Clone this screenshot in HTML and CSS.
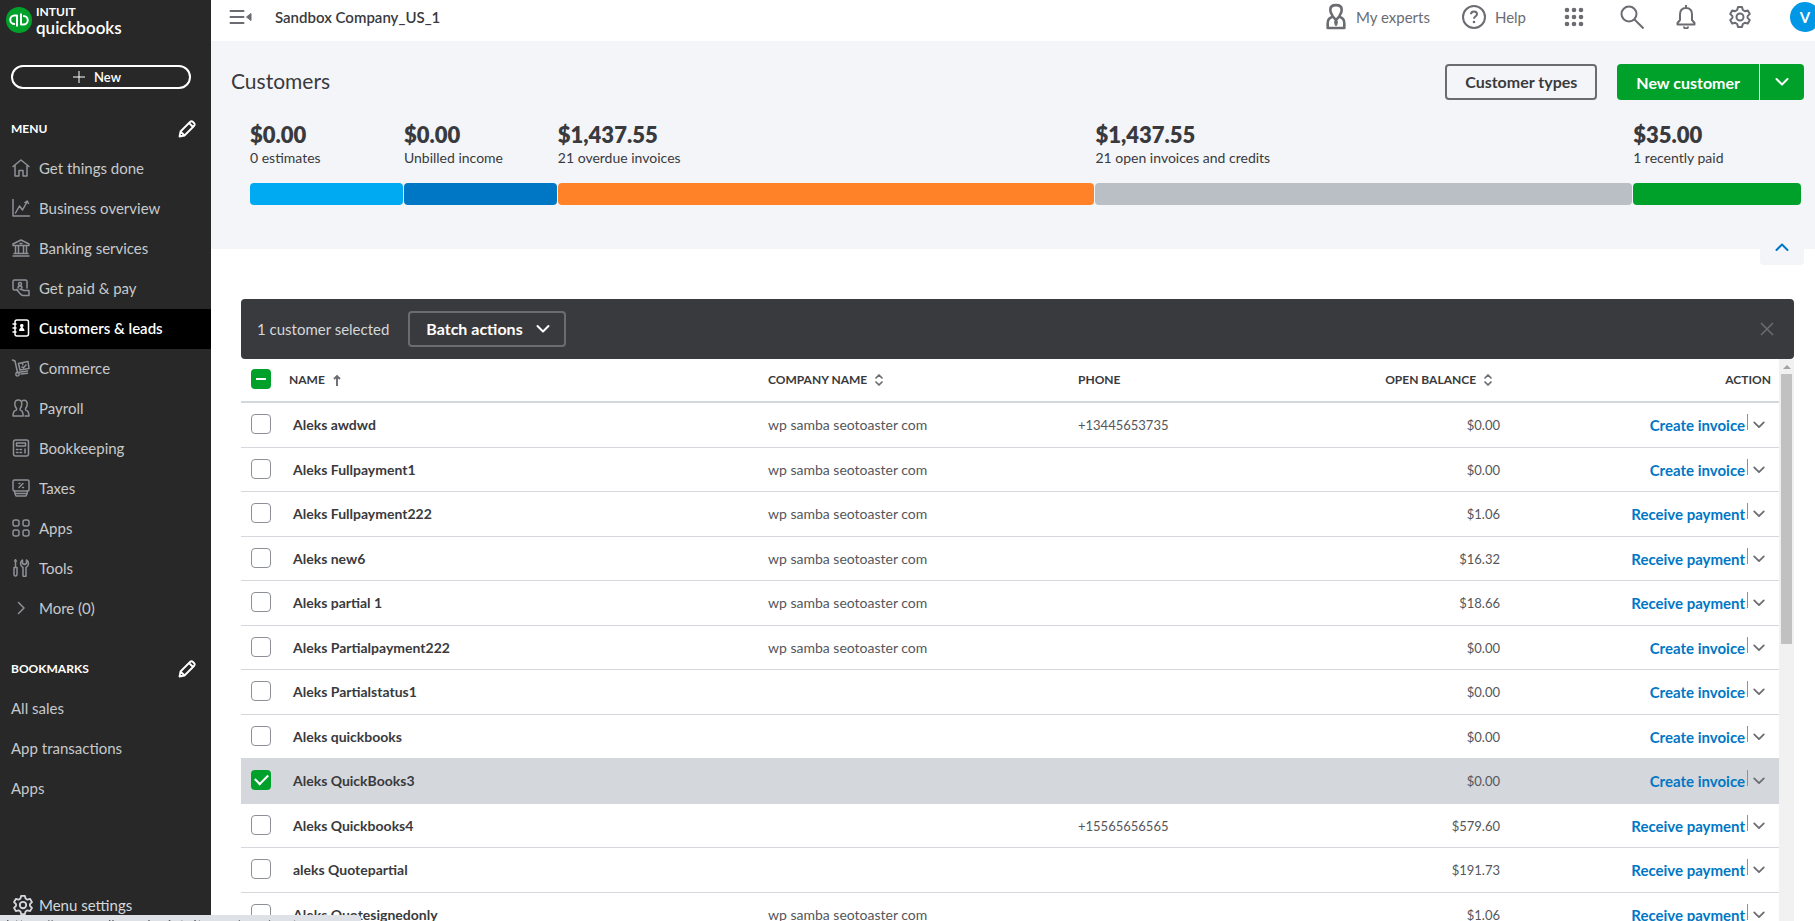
FILE: index.html
```
<!DOCTYPE html>
<html lang="en">
<head>
<meta charset="utf-8">
<title>Customers</title>
<link rel="stylesheet" href="styles.css">
</head>
<body>
<svg class="defs" aria-hidden="true">
  <symbol id="chev" viewBox="0 0 16 16"><path d="M2.5 5 8 10.5 13.5 5" fill="none" stroke="currentColor" stroke-width="2" stroke-linecap="round" stroke-linejoin="round"/></symbol>
  <symbol id="pencil" viewBox="0 0 20 20"><path d="M2.500 17.500l1-5L13 3q1.500-1.500 3 0l1 1q1.500 1.500 0 3l-9.500 9.500zM12 4l4 4M3.500 12.500l4 4" fill="none" stroke="currentColor" stroke-width="1.800" stroke-linejoin="round"/></symbol>
  <symbol id="gear" viewBox="0 0 24 24"><path d="M10 2h4l.8 3 2 1.200 3-.8 2 3.500-2.200 2.200v1.800l2.200 2.200-2 3.500-3-.8-2 1.200-.8 3h-4l-.8-3-2-1.200-3 .8-2-3.500 2.200-2.200v-1.800L2.200 8.900l2-3.500 3 .8 2-1.200z" fill="none" stroke="currentColor" stroke-width="2" stroke-linejoin="round"/><circle cx="12" cy="12" r="3.500" fill="none" stroke="currentColor" stroke-width="2"/></symbol>
  <symbol id="sort" viewBox="0 0 10 14"><path d="M2 5 5 2 8 5M2 9 5 12 8 9" fill="none" stroke="currentColor" stroke-width="1.700" stroke-linecap="round" stroke-linejoin="round"/></symbol>
</svg>

<div class="app">
  <aside class="sidebar">
    <a class="logo" href="#" aria-label="Intuit QuickBooks">
      <svg class="logo-mark" viewBox="0 0 26 26"><circle cx="13" cy="13" r="13" fill="#00a12b"/><path d="M11 8.500H8.500a4 4 0 0 0 0 8.500H9M11 7.700v11.800M15 17.500h2.500a4 4 0 0 0 0-8.500H17M15 6.500v11.800" fill="none" stroke="#fff" stroke-width="2"/></svg>
      <span class="logo-text"><span class="logo-top">INTUIT</span><span class="logo-name">quickbooks</span></span>
    </a>
    <button class="new-btn" type="button"><svg viewBox="0 0 12 12"><path d="M6 0v12M0 6h12" stroke="currentColor" stroke-width="1"/></svg>New</button>

    <div class="side-head"><h2>MENU</h2><button type="button" aria-label="Edit menu"><svg><use href="#pencil"/></svg></button></div>
    <nav class="menu">
      <a href="#"><svg viewBox="0 0 18 18"><path d="M1 7.500 9 1l8 6.500M3 6v11h4v-5.500h4V17h4V6"/></svg>Get things done</a>
      <a href="#"><svg viewBox="0 0 18 18"><path d="M1 .5V17h16.500M3.500 14l4-7 3 4L15 3M13 3.500l2.200-1.500L16.500 4.500"/></svg>Business overview</a>
      <a href="#"><svg viewBox="0 0 18 18"><path d="M1 5 9 1l8 4v1.500H1zM3.500 7v7M6.500 7v7M11.500 7v7M14.500 7v7M2 14.500h14M1 17h16M8 4.500h2"/></svg>Banking services</a>
      <a href="#"><svg viewBox="0 0 18 18"><path d="M6 11H2.500Q1 11 1 9.500v-7Q1 1 2.500 1h11Q15 1 15 2.500V9M6 9q0-2 2-2t2 2M4.500 10.500l3.500 4q1.500 2 3 2h6v-5h-5L8 10"/><circle cx="8" cy="5" r="1.500"/></svg>Get paid &amp; pay</a>
      <a href="#" class="active" aria-current="page"><svg viewBox="0 0 18 18"><rect x="3" y="1" width="13.500" height="16" rx="2"/><path d="M1 5h3M1 9h3M1 13h3"/><path class="solid" d="M9.700 5a1.600 1.600 0 0 1 1 3l.3 1q1.500.5 1.500 3H7q0-2.500 1.500-3l.3-1a1.600 1.600 0 0 1 .9-3z"/></svg>Customers &amp; leads</a>
      <a href="#"><svg viewBox="0 0 18 18"><path d="M.5 1 3 2l2.500 11.500L15.500 12M6.500 4.500l9.500-2 1 7-9 1.500zM10 8l1.500.7L14 6M10.500 3.700l.3 2"/><circle cx="5.500" cy="15.200" r="1.700"/><path d="M9 15l6.500-.7"/></svg>Commerce</a>
      <a href="#"><svg viewBox="0 0 18 18"><path d="M4.500 11V9.500Q2.800 7.500 2.800 5q0-4 3.500-4T9.800 5q0 2.500-1.600 4.500V11q3 .8 3 6H1q0-5.500 3.500-6zM10 2q1-.8 2-.8 3.200 0 3.200 3.800 0 2.500-1.600 4.500v1.500q3.400.8 3.400 6h-4"/></svg>Payroll</a>
      <a href="#"><svg viewBox="0 0 18 18"><rect x="1.500" y="1" width="15" height="16" rx="2"/><rect x="4.500" y="4" width="9" height="3"/><path d="M4.500 10.500h1.500M8 10.500h1.500M4.500 13.500h1.500M8 13.500h1.500M13 10v4"/></svg>Bookkeeping</a>
      <a href="#"><svg viewBox="0 0 18 18"><rect x="1" y="1" width="16" height="11" rx="1.500"/><path d="M7 8.500 11 4.500M7 4.500h1M10.500 8.500h1M2.500 12l.5 2.500h12l.5-2.500M3 15l1 2h10l1-2"/></svg>Taxes</a>
      <a href="#"><svg viewBox="0 0 18 18"><rect x="1" y="1" width="6" height="6" rx="2"/><rect x="11" y="1" width="6" height="6" rx="2"/><rect x="1" y="11" width="6" height="6" rx="2"/><rect x="11" y="11" width="6" height="6" rx="2"/></svg>Apps</a>
      <a href="#"><svg viewBox="0 0 18 18"><path d="M3.500 0v8M2.500 2h2M2 8.500h3V15q0 2-1.500 2T2 15zM11 17V8.500Q8.500 7 8.500 4.500T10.500 1v3.500l2 1 2-1V1q2 1 2 3.500T14 8.500V17q-1.500.8-3 0"/></svg>Tools</a>
      <a href="#"><svg viewBox="0 0 18 18"><path d="m6.500 3.500 5.500 5.500-5.500 5.500"/></svg>More (0)</a>
    </nav>

    <div class="side-head"><h2>BOOKMARKS</h2><button type="button" aria-label="Edit bookmarks"><svg><use href="#pencil"/></svg></button></div>
    <nav class="menu"><a href="#">All sales</a><a href="#">App transactions</a><a href="#">Apps</a></nav>
    <a class="settings" href="#"><svg><use href="#gear"/></svg>Menu settings</a>
  </aside>

  <div class="main">
    <header class="topbar">
      <button class="icon-btn" type="button" aria-label="Collapse menu"><svg class="burger" viewBox="0 0 23 16"><path d="M1 2h13M1 8h13M1 14h13" stroke="currentColor" stroke-width="2" stroke-linecap="round"/><path d="m21.500 4.500v7L17 8z" fill="currentColor" stroke="currentColor" stroke-linejoin="round"/></svg></button>
      <span class="company">Sandbox Company_US_1</span>
      <div class="tools">
        <a href="#"><svg class="expert" viewBox="0 0 20 26"><path d="M6.500 13.500V12Q4.500 9.500 4.500 6.500 4.500 2 10 2t5.500 4.500q0 3-2 5.500v1.500q4.500 1 4.500 6V24H2v-4.500q0-5 4.500-6zM7 13l3 3.500 3-3.500" fill="none" stroke="currentColor" stroke-width="2.500" stroke-linejoin="round"/><path d="M10 15.500l2 2.500-1 4H9l-1-4z" fill="currentColor"/></svg>My experts</a>
        <a href="#"><svg class="help" viewBox="0 0 24 24"><circle cx="12" cy="12" r="11" fill="none" stroke="currentColor" stroke-width="2"/><path d="M9 9.200q0-2.800 3-2.800t3 2.600q0 1.500-1.500 2.300T12 13.800" fill="none" stroke="currentColor" stroke-width="2"/><circle cx="12" cy="17" r="1.300" fill="currentColor"/></svg>Help</a>
        <button class="icon-btn" type="button" aria-label="Apps"><svg class="grid" viewBox="0 0 20 20" fill="currentColor"><circle cx="3" cy="3" r="2.300"/><circle cx="10" cy="3" r="2.300"/><circle cx="17" cy="3" r="2.300"/><circle cx="3" cy="10" r="2.300"/><circle cx="10" cy="10" r="2.300"/><circle cx="17" cy="10" r="2.300"/><circle cx="3" cy="17" r="2.300"/><circle cx="10" cy="17" r="2.300"/><circle cx="17" cy="17" r="2.300"/></svg></button>
        <button class="icon-btn" type="button" aria-label="Search"><svg viewBox="0 0 24 24" fill="none" stroke="currentColor" stroke-width="2"><circle cx="9" cy="9" r="7.500"/><path d="m14.500 14.500 9 9"/></svg></button>
        <button class="icon-btn" type="button" aria-label="Notifications"><svg viewBox="0 0 24 24" fill="none" stroke="currentColor" stroke-width="2" stroke-linejoin="round"><path d="M12 0v2.500M6 15V9.500q0-6.500 6-6.500t6 6.500V15l2.500 3v1.500h-17V18zM10 21.500q0 2 2 2t2-2"/></svg></button>
        <button class="icon-btn" type="button" aria-label="Settings"><svg><use href="#gear"/></svg></button>
        <button class="avatar" type="button" aria-label="Account">V</button>
      </div>
    </header>

    <section class="hero">
      <div class="hero-head">
        <h1>Customers</h1>
        <button class="btn outline" type="button">Customer types</button>
        <div class="split">
          <button class="btn green" type="button">New customer</button>
          <button class="btn green caret" type="button" aria-label="More new customer options"><svg><use href="#chev"/></svg></button>
        </div>
      </div>
      <div class="moneybar">
        <div class="seg sky"><strong>$0.00</strong><span>0 estimates</span><i></i></div>
        <div class="seg blue"><strong>$0.00</strong><span>Unbilled income</span><i></i></div>
        <div class="seg orange wide"><strong>$1,437.55</strong><span>21 overdue invoices</span><i></i></div>
        <div class="seg gray wide"><strong>$1,437.55</strong><span>21 open invoices and credits</span><i></i></div>
        <div class="seg paid"><strong>$35.00</strong><span>1 recently paid</span><i></i></div>
      </div>
      <button class="fold" type="button" aria-label="Collapse summary"><svg><use href="#chev"/></svg></button>
    </section>

    <section class="list">
      <div class="batch">
        <span>1 customer selected</span>
        <button class="batch-btn" type="button">Batch actions<svg><use href="#chev"/></svg></button>
        <button class="close" type="button" aria-label="Clear selection"><svg viewBox="0 0 14 14"><path d="m1 1 12 12M13 1 1 13" stroke="currentColor" stroke-width="1.500"/></svg></button>
      </div>
      <div class="table-area">
        <table>
          <colgroup><col class="c-check"><col class="c-name"><col class="c-company"><col class="c-phone"><col class="c-balance"><col class="c-action"></colgroup>
          <thead><tr>
            <th><input class="partial" type="checkbox" aria-label="Select all customers" checked></th>
            <th>NAME <svg class="up" viewBox="0 0 10 14"><path d="M5 13V3M2 6 5 3l3 3" fill="none" stroke="currentColor" stroke-width="1.900"/></svg></th>
            <th>COMPANY NAME <svg><use href="#sort"/></svg></th>
            <th>PHONE</th>
            <th class="num">OPEN BALANCE <svg><use href="#sort"/></svg></th>
            <th class="act">ACTION</th>
          </tr></thead>
          <tbody id="rows"></tbody>
        </table>
        <div class="scrollbar" aria-hidden="true"><div class="arrow"></div><div class="thumb"></div></div>
      </div>
    </section>
  </div>
</div>
<div class="status">https://app.sandbox.qbo.intuit.com/app/customers</div>
<script src="app.js"></script>
</body>
</html>
```
FILE: styles.css
```
* { box-sizing: border-box; }
body { margin: 0; font: 15px/20px Lato, "Open Sans", sans-serif; color: #393a3d; background: #fff; }
h1, h2 { margin: 0; }
button { font: inherit; color: inherit; background: none; border: 0; padding: 0; cursor: pointer; }
a { color: inherit; text-decoration: none; }
svg { flex: none; display: block; }
.defs { position: absolute; width: 0; height: 0; }
.app { display: flex; height: 100vh; overflow: hidden; }

.sidebar { width: 211px; flex: none; display: flex; flex-direction: column; background: #282828; color: #c7c9cc; }
.logo { display: flex; gap: 4px; padding: 5px 6px 0; height: 65px; color: #fff; }
.logo-mark { width: 26px; height: 26px; margin-top: 2px; }
.logo-text { display: flex; flex-direction: column; }
.logo-top { font-size: 12px; line-height: 14px; font-weight: 700; }
.logo-name { font-size: 17px; line-height: 18px; font-weight: 600; }
.new-btn { flex: none; display: flex; align-items: center; justify-content: center; gap: 9px; height: 24px; margin: 0 20px 20px 11px; padding: 0 8px 1px 0; border: 2px solid #fff; border-radius: 12px; color: #fff; font-size: 13px; font-weight: 600; }
.new-btn svg { width: 12px; height: 12px; }
.side-head { flex: none; display: flex; align-items: center; justify-content: space-between; height: 40px; padding: 0 14px 0 11px; color: #fff; }
.side-head h2 { font-size: 12px; font-weight: 700; }
.side-head svg { width: 20px; height: 20px; }
.menu a { display: flex; align-items: center; gap: 8px; height: 40px; padding: 0 12px 2px 11px; }
.menu svg { width: 20px; height: 18px; fill: none; stroke: #8d9096; stroke-width: 1.5; stroke-linejoin: round; stroke-linecap: round; }
.menu .active { background: #000; color: #fff; font-weight: 600; }
.menu .active svg { stroke: #fff; }
.menu .solid { fill: currentColor; stroke: none; }
.menu + .side-head { margin-top: 20px; }
.settings { display: flex; align-items: center; gap: 5px; margin-top: auto; padding: 0 12px 5px; color: #d4d7dc; }
.settings svg { width: 22px; height: 22px; }

.main { flex: 1; min-width: 0; display: flex; flex-direction: column; }
.topbar { flex: none; display: flex; align-items: center; height: 41px; padding: 0 0 8px 18px; color: #6b6c72; }
.burger { width: 24px; height: 16px; }
.company { margin-left: 22px; color: #393a3d; font-weight: 600; }
.tools { display: flex; align-items: center; margin-left: auto; gap: 30px; margin-right: -5px; }
.tools a { display: flex; align-items: center; gap: 9px; margin-right: 2px; }
.tools .expert { width: 22px; height: 27px; }
.tools svg { width: 24px; height: 24px; }
.tools .grid { width: 20px; height: 20px; margin: 0 6px; }
.avatar { width: 30px; height: 30px; margin-left: 8px; border-radius: 50%; background: #0097e6; color: #fff; font-weight: 700; }

.hero { position: relative; flex: none; height: 208px; padding: 23px 11px 0 20px; background: #f4f5f8; }
.hero-head { display: flex; align-items: center; gap: 20px; height: 36px; }
h1 { flex: 1; padding-bottom: 2px; font-size: 21px; line-height: 28px; font-weight: 400; }
.btn { height: 36px; padding: 2px 19px 0; font-size: 16px; font-weight: 700; border-radius: 4px; }
.outline { border: 2px solid #6b6c72; padding: 0 18px; }
.split { display: flex; gap: 1px; }
.green { background: #00a12b; color: #fff; border-radius: 4px 0 0 4px; }
.caret { width: 44px; padding: 0 14px; border-radius: 0 4px 4px 0; }
.caret svg, .fold svg { width: 16px; height: 16px; }
.moneybar { display: flex; gap: 1px; margin: 22px 3px 0 19px; }
.seg { flex: 153 1 0; min-width: 0; display: flex; flex-direction: column; white-space: nowrap; }
.seg.wide { flex-grow: 537; }
.seg.paid { flex-grow: 168; }
.seg strong { font-size: 22px; line-height: 26px; font-weight: 800; }
.seg span { font-size: 14px; line-height: 20px; }
.seg i { height: 22px; margin-top: 15px; border-radius: 4px; background: #00a12b; }
.sky i { background: #00aaf3; }
.blue i { background: #0077c5; }
.orange i { background: #ff8228; }
.gray i { background: #babec5; }
.fold { position: absolute; right: 11px; bottom: -16px; width: 44px; height: 28px; padding: 0 14px 8px; background: #f4f5f8; border-radius: 0 0 4px 4px; color: #0077c5; }
.fold svg { transform: rotate(180deg); }

.list { flex: 1; min-height: 0; display: flex; flex-direction: column; padding: 50px 21px 0 30px; }
.batch { flex: none; display: flex; align-items: center; height: 60px; padding: 0 20px 0 16px; background: #393a3d; color: #d4d7dc; border-radius: 4px; }
.batch-btn { display: flex; align-items: center; gap: 12px; height: 36px; margin-left: 19px; padding: 0 13px 0 16px; border: 2px solid #6b6c72; border-radius: 4px; color: #fff; font-size: 16px; font-weight: 700; }
.batch-btn svg { width: 16px; height: 16px; }
.close { margin-left: auto; color: #6b6c72; }
.close svg { width: 14px; height: 14px; }
.table-area { flex: 1; min-height: 0; display: flex; overflow: hidden; }
table { flex: 1; align-self: flex-start; border-collapse: separate; border-spacing: 0; table-layout: fixed; }
.c-check { width: 48px; }
.c-name { width: 479px; }
.c-company { width: 310px; }
.c-phone { width: 230px; }
.c-balance { width: 192px; }
th { height: 44px; padding: 0; border-bottom: 2px solid #d4d7dc; text-align: left; font-size: 12px; font-weight: 700; }
th svg { display: inline-block; vertical-align: -3px; width: 10px; height: 14px; margin-left: 4px; color: #6b6c72; }
th.num { text-align: right; padding-right: 7px; }
th.act { text-align: right; padding-right: 8px; }
td { height: 45px; padding: 0; border-bottom: 1px solid #d4d7dc; font-size: 13px; color: #55565b; }
tr:nth-child(even) td { height: 44px; }
th:first-child, td:first-child { padding: 0 0 2px 10px; }
td.name { padding-left: 4px; font-size: 14px; font-weight: 700; color: #393a3d; }
td.firm { font-size: 14px; }
td.num { text-align: right; }
.selected td { background: #d4d7dc; }
.action { display: flex; align-items: center; justify-content: flex-end; gap: 7px; padding-right: 13px; }
.action a { color: #0077c5; font-size: 15px; font-weight: 700; }
.action button { display: flex; align-items: center; position: relative; color: #6b6c72; }
.action button::before { content: ""; position: absolute; left: -5px; bottom: 2px; width: 1px; height: 16px; background: #8d9096; }
.action svg { width: 14px; height: 14px; }
input { appearance: none; display: grid; place-items: center; width: 20px; height: 20px; margin: 0; border: 1px solid #8d9096; border-radius: 4px; background: #fff; }
input:checked { border: 0; background: #00a12b; }
input:checked::after { content: ""; width: 11px; height: 6px; margin-bottom: 4px; border: solid #fff; border-width: 0 0 2px 2px; transform: rotate(-45deg); }
input.partial:checked::after { width: 10px; height: 2px; margin: 0; border: 0; background: #fff; transform: none; }
.scrollbar { flex: none; width: 15px; padding: 6px 2px; background: #f1f1f1; }
.arrow { width: 0; margin: 0 auto 5px; border: 4px solid transparent; border-top: 0; border-bottom-color: #a3a3a3; }
.thumb { height: 49%; background: #c1c1c1; }
.status { position: fixed; left: 0; bottom: 0; width: 361px; height: 6px; padding: 2px 6px; overflow: hidden; white-space: nowrap; background: #dee1e6; border-radius: 0 4px 0 0; color: #5f6368; font-size: 15px; line-height: 16px; }
```
FILE: app.js
```
const company = 'wp samba seotoaster com';
const customers = [
  ['Aleks awdwd', company, '+13445653735', '0.00'],
  ['Aleks Fullpayment1', company, '', '0.00'],
  ['Aleks Fullpayment222', company, '', '1.06'],
  ['Aleks new6', company, '', '16.32'],
  ['Aleks partial 1', company, '', '18.66'],
  ['Aleks Partialpayment222', company, '', '0.00'],
  ['Aleks Partialstatus1', '', '', '0.00'],
  ['Aleks quickbooks', '', '', '0.00'],
  ['Aleks QuickBooks3', '', '', '0.00', true],
  ['Aleks Quickbooks4', '', '+15565656565', '579.60'],
  ['aleks Quotepartial', '', '', '191.73'],
  ['Aleks Quotesignedonly', company, '', '1.06']
];
document.getElementById('rows').innerHTML = customers.map(([name, comp, phone, balance, selected]) => `
  <tr${selected ? ' class="selected"' : ''}>
    <td><input type="checkbox" aria-label="Select ${name}"${selected ? ' checked' : ''}></td>
    <td class="name">${name}</td>
    <td class="firm">${comp}</td>
    <td>${phone}</td>
    <td class="num">$${balance}</td>
    <td><div class="action"><a href="#">${balance === '0.00' ? 'Create invoice' : 'Receive payment'}</a><button type="button" aria-label="More actions for ${name}"><svg><use href="#chev"/></svg></button></div></td>
  </tr>`).join('');
```
